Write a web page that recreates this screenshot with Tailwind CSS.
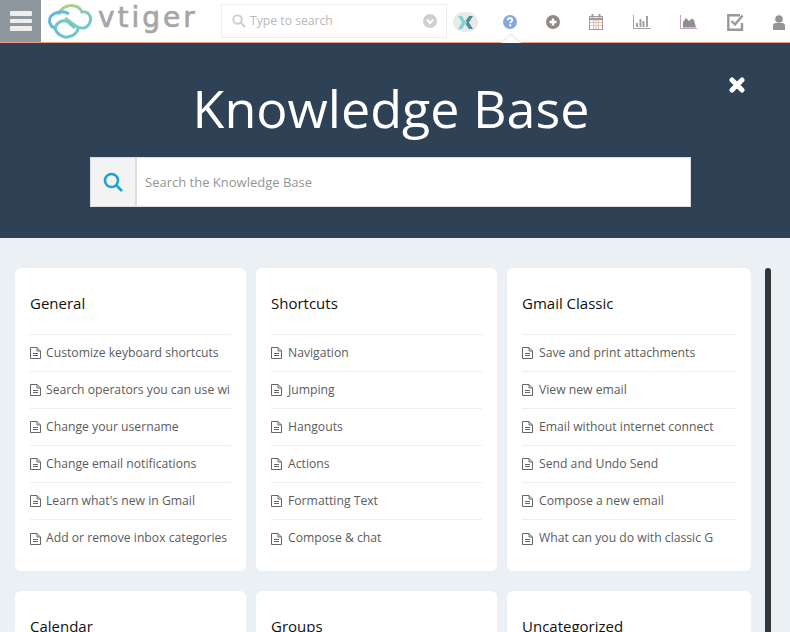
<!DOCTYPE html>
<html lang="en">
<head>
    <meta charset="UTF-8">
    <title>Knowledge Base</title>
    <script src="https://cdn.jsdelivr.net/npm/@tailwindcss/browser@4"></script>
</head>
<body class="bg-[#ebf0f4] font-['Open_Sans',sans-serif] h-[632px] w-[790px] overflow-hidden">
    <!-- top bar -->
    <div class="relative flex h-[43px] bg-white border-b border-[#f0a080]">
        <div class="flex flex-col justify-center gap-[3px] items-center w-[41px] h-[42px] bg-[#8f979e]">
            <div class="w-[22px] h-[5px] rounded-[1px] bg-[#eeeeee]"></div>
            <div class="w-[22px] h-[4px] rounded-[1px] bg-[#eeeeee]"></div>
            <div class="w-[22px] h-[5px] rounded-[1px] bg-[#eeeeee]"></div>
        </div>
        <div class="flex items-center w-[180px] pl-[7px]">
            <svg width="44" height="36" viewBox="0 0 44 36" fill="none" stroke-width="3">
                <defs>
                    <linearGradient id="cloudtop" x1="0" y1="0" x2="1" y2="1"><stop offset="0" stop-color="#b5d57a"/><stop offset="1" stop-color="#6cc6da"/></linearGradient>
                    <linearGradient id="cloudlow" x1="0" y1="0" x2="1" y2="1"><stop offset="0" stop-color="#5fb4ea"/><stop offset="1" stop-color="#6fc9c0"/></linearGradient>
                </defs>
                <path d="M11 12C12 5 20 1 27 3C31 4 33 7 34 9C40 8 44 13 42 19C40 25 34 27 28 23L17 15" stroke="url(#cloudtop)"/>
                <path d="M21 11C15 7 7 9 3 13C0 18 2 24 7 25C8 30 14 35 20 34C27 33 30 28 30 25" stroke="url(#cloudlow)"/>
                <path d="M7 25C9 19 15 16 20 19L27 25" stroke="#74c7c4"/>
            </svg>
            <span class="ml-[6px] -mt-[7px] text-[28px] leading-none tracking-[3px] text-[#a6a6a6] [-webkit-text-stroke:0.7px_#a6a6a6] font-['DejaVu_Sans',sans-serif]">vtiger</span>
        </div>
        <div class="flex items-center mt-[4px] w-[226px] h-[34px] border border-[#eeeeee] pl-[10px] pr-[9px]">
            <svg width="14" height="14" viewBox="0 0 14 14" fill="none" stroke="#cfcfcf" stroke-width="2"><circle cx="5.5" cy="5.5" r="4.2"/><path d="M8.8 8.8L13 13"/></svg>
            <span class="ml-[4px] text-[12.2px] text-[#b8b8b8] flex-1">Type to search</span>
            <svg width="14" height="14" viewBox="0 0 14 14"><circle cx="7" cy="7" r="7" fill="#cfcfcf"/><path d="M3.8 5.5L7 9L10.2 5.5" fill="none" stroke="#fff" stroke-width="2"/></svg>
        </div>
        <div class="flex items-center h-[42px] pt-[2px] ml-[6px]">
            <div class="flex items-center justify-center w-[25px] h-[20px] rounded-full bg-[#e8eaea]">
                <svg width="17" height="15" viewBox="0 0 17 15"><path d="M1 1H5L9 7.500L5 14H1L5 7.500Z" fill="#7fd3d3"/><path d="M16 1H12L8.500 6L10 7.500L8.500 9L12 14H16L12 7.500Z" fill="#4f8f98"/></svg>
            </div>
            <svg class="ml-[25px]" width="14" height="14" viewBox="0 0 14 14"><circle cx="7" cy="7" r="7" fill="#88a6e0"/><path d="M4.700 5.300C4.700 3.900 5.700 3.200 7 3.200C8.300 3.200 9.300 4 9.300 5.200C9.300 6.600 7.200 6.700 7.200 8.300" fill="none" stroke="#fff" stroke-width="1.800"/><rect x="6.200" y="9.400" width="2" height="1.900" fill="#fff"/></svg>
            <svg class="ml-[29px]" width="14" height="14" viewBox="0 0 14 14"><circle cx="7" cy="7" r="7" fill="#8d8a88"/><path d="M7 3.500V10.500M3.500 7H10.500" stroke="#fff" stroke-width="2.400"/></svg>
            <svg class="ml-[29px]" width="14" height="16" viewBox="0 0 14 16" fill="none" stroke="#a09c9c"><rect x=".5" y="2.500" width="13" height="13"/><path d="M1 5H13" stroke-width="2.500"/><path d="M1 8.500H13M1 11.500H13M4.500 6V15M7 6V15M9.500 6V15" stroke="#dcc0b4"/><path d="M3.500 0V3.500M10.500 0V3.500" stroke-width="2"/></svg>
            <svg class="ml-[30px]" width="18" height="14" viewBox="0 0 18 14" fill="none"><path d="M0.500 0V13.500H18" stroke="#a3a3a3"/><path d="M4 12V8M7.500 12V4M10.500 12V6M14 12V1" stroke="#a3a3a3" stroke-width="2"/></svg>
            <svg class="ml-[29px]" width="17" height="14" viewBox="0 0 17 14"><path d="M0.500 0V13.500H17" fill="none" stroke="#c8a0cc"/><path d="M3 12.500V7L6 3L9 6L12 3.500L14 5L16 12.500Z" fill="#8f8f8f"/></svg>
            <svg class="ml-[30px]" width="17" height="17" viewBox="0 0 17 17" fill="none"><path d="M15 9V15.700H1.300V1.300H13" stroke="#999999" stroke-width="2.400"/><path d="M4.500 7L8 10.500L15.500 1.500" stroke="#999999" stroke-width="2.400"/></svg>
            <svg class="ml-[29px]" width="12" height="15" viewBox="0 0 12 15"><circle cx="6" cy="4" r="3.800" fill="#949494"/><path d="M0 15V10.500C0 8.500 2 8 4 8H8C10 8 12 8.500 12 10.500V15Z" fill="#949494"/></svg>
        </div>
        <!-- active caret -->
        <svg class="absolute left-[501px] top-[34px]" width="20" height="9" viewBox="0 0 20 9"><path d="M0 9L10 0L20 9Z" fill="#fff"/><path d="M0 9L10 0L20 9" fill="none" stroke="#dddddd"/></svg>
    </div>

    <!-- hero -->
    <div class="relative h-[195px] bg-[#2f4155]">
        <h1 class="pt-[35px] pr-[8px] text-center text-[52px] leading-[60px] text-white">Knowledge Base</h1>
        <svg class="absolute left-[729px] top-[34px]" width="16" height="16" viewBox="0 0 16 16"><path d="M3 3L13 13M13 3L3 13" stroke="#fff" stroke-width="5" stroke-linecap="round"/></svg>
        <div class="flex mt-[19px] ml-[90px] w-[601px] h-[50px] bg-white border border-[#dddddd]">
            <div class="flex items-center justify-center w-[46px] bg-[#f3f3f3] border-r-2 border-[#dddddd]">
                <svg width="20" height="20" viewBox="0 0 20 20" fill="none" stroke="#1ca3d4" stroke-width="2.600"><circle cx="8.500" cy="8.500" r="6.500"/><path d="M13 13L19 19"/></svg>
            </div>
            <div class="flex items-center pl-[8px] pt-[1px] text-[13px] font-medium text-[#959595]">Search the Knowledge Base</div>
        </div>
    </div>

    <!-- article cards -->
    <div class="grid grid-cols-[231px_241px_244px] gap-x-[10px] gap-y-[20px] pl-[15px] pt-[30px]">
        <div class="bg-white rounded-[6px] px-[15px] h-[303px]">
            <h3 class="h-[67px] pt-[24px] text-[15px] leading-[22px] font-medium text-[#111111] border-b border-[#eeeeee]">General</h3>
            <div class="flex items-center h-[37px] border-b border-[#eeeeee] text-[12.2px] text-[#5c5c5c] whitespace-nowrap overflow-hidden"><svg class="mr-[5px] shrink-0" width="11" height="12" viewBox="0 0 11 12" fill="none" stroke="#666666"><path d="M7 .500H.500V11.500H10.500V4ZM7 .500V4H10.500M3 6.500H8M3 8.500H8"/></svg><span class="w-[184px] overflow-hidden">Customize keyboard shortcuts</span></div>
            <div class="flex items-center h-[37px] border-b border-[#eeeeee] text-[12.2px] text-[#5c5c5c] whitespace-nowrap overflow-hidden"><svg class="mr-[5px] shrink-0" width="11" height="12" viewBox="0 0 11 12" fill="none" stroke="#666666"><path d="M7 .500H.500V11.500H10.500V4ZM7 .500V4H10.500M3 6.500H8M3 8.500H8"/></svg><span class="w-[184px] overflow-hidden">Search operators you can use with Gmail</span></div>
            <div class="flex items-center h-[37px] border-b border-[#eeeeee] text-[12.2px] text-[#5c5c5c] whitespace-nowrap overflow-hidden"><svg class="mr-[5px] shrink-0" width="11" height="12" viewBox="0 0 11 12" fill="none" stroke="#666666"><path d="M7 .500H.500V11.500H10.500V4ZM7 .500V4H10.500M3 6.500H8M3 8.500H8"/></svg><span class="w-[184px] overflow-hidden">Change your username</span></div>
            <div class="flex items-center h-[37px] border-b border-[#eeeeee] text-[12.2px] text-[#5c5c5c] whitespace-nowrap overflow-hidden"><svg class="mr-[5px] shrink-0" width="11" height="12" viewBox="0 0 11 12" fill="none" stroke="#666666"><path d="M7 .500H.500V11.500H10.500V4ZM7 .500V4H10.500M3 6.500H8M3 8.500H8"/></svg><span class="w-[184px] overflow-hidden">Change email notifications</span></div>
            <div class="flex items-center h-[37px] border-b border-[#eeeeee] text-[12.2px] text-[#5c5c5c] whitespace-nowrap overflow-hidden"><svg class="mr-[5px] shrink-0" width="11" height="12" viewBox="0 0 11 12" fill="none" stroke="#666666"><path d="M7 .500H.500V11.500H10.500V4ZM7 .500V4H10.500M3 6.500H8M3 8.500H8"/></svg><span class="w-[184px] overflow-hidden">Learn what's new in Gmail</span></div>
            <div class="flex items-center h-[37px] text-[12.2px] text-[#5c5c5c] whitespace-nowrap overflow-hidden"><svg class="mr-[5px] shrink-0" width="11" height="12" viewBox="0 0 11 12" fill="none" stroke="#666666"><path d="M7 .500H.500V11.500H10.500V4ZM7 .500V4H10.500M3 6.500H8M3 8.500H8"/></svg><span class="w-[184px] overflow-hidden">Add or remove inbox categories</span></div>
        </div>
        <div class="bg-white rounded-[6px] px-[15px] h-[303px]">
            <h3 class="h-[67px] pt-[24px] text-[15px] leading-[22px] font-medium text-[#111111] border-b border-[#eeeeee]">Shortcuts</h3>
            <div class="flex items-center h-[37px] border-b border-[#eeeeee] text-[12.2px] text-[#5c5c5c] whitespace-nowrap"><svg class="mr-[6px] shrink-0" width="11" height="12" viewBox="0 0 11 12" fill="none" stroke="#666666"><path d="M7 .500H.500V11.500H10.500V4ZM7 .500V4H10.500M3 6.500H8M3 8.500H8"/></svg>Navigation</div>
            <div class="flex items-center h-[37px] border-b border-[#eeeeee] text-[12.2px] text-[#5c5c5c] whitespace-nowrap"><svg class="mr-[6px] shrink-0" width="11" height="12" viewBox="0 0 11 12" fill="none" stroke="#666666"><path d="M7 .500H.500V11.500H10.500V4ZM7 .500V4H10.500M3 6.500H8M3 8.500H8"/></svg>Jumping</div>
            <div class="flex items-center h-[37px] border-b border-[#eeeeee] text-[12.2px] text-[#5c5c5c] whitespace-nowrap"><svg class="mr-[6px] shrink-0" width="11" height="12" viewBox="0 0 11 12" fill="none" stroke="#666666"><path d="M7 .500H.500V11.500H10.500V4ZM7 .500V4H10.500M3 6.500H8M3 8.500H8"/></svg>Hangouts</div>
            <div class="flex items-center h-[37px] border-b border-[#eeeeee] text-[12.2px] text-[#5c5c5c] whitespace-nowrap"><svg class="mr-[6px] shrink-0" width="11" height="12" viewBox="0 0 11 12" fill="none" stroke="#666666"><path d="M7 .500H.500V11.500H10.500V4ZM7 .500V4H10.500M3 6.500H8M3 8.500H8"/></svg>Actions</div>
            <div class="flex items-center h-[37px] border-b border-[#eeeeee] text-[12.2px] text-[#5c5c5c] whitespace-nowrap"><svg class="mr-[6px] shrink-0" width="11" height="12" viewBox="0 0 11 12" fill="none" stroke="#666666"><path d="M7 .500H.500V11.500H10.500V4ZM7 .500V4H10.500M3 6.500H8M3 8.500H8"/></svg>Formatting Text</div>
            <div class="flex items-center h-[37px] text-[12.2px] text-[#5c5c5c] whitespace-nowrap"><svg class="mr-[6px] shrink-0" width="11" height="12" viewBox="0 0 11 12" fill="none" stroke="#666666"><path d="M7 .500H.500V11.500H10.500V4ZM7 .500V4H10.500M3 6.500H8M3 8.500H8"/></svg>Compose &amp; chat</div>
        </div>
        <div class="bg-white rounded-[6px] px-[15px] h-[303px]">
            <h3 class="h-[67px] pt-[24px] text-[15px] leading-[22px] font-medium text-[#111111] border-b border-[#eeeeee]">Gmail Classic</h3>
            <div class="flex items-center h-[37px] border-b border-[#eeeeee] text-[12.2px] text-[#5c5c5c] whitespace-nowrap"><svg class="mr-[6px] shrink-0" width="11" height="12" viewBox="0 0 11 12" fill="none" stroke="#666666"><path d="M7 .500H.500V11.500H10.500V4ZM7 .500V4H10.500M3 6.500H8M3 8.500H8"/></svg>Save and print attachments</div>
            <div class="flex items-center h-[37px] border-b border-[#eeeeee] text-[12.2px] text-[#5c5c5c] whitespace-nowrap"><svg class="mr-[6px] shrink-0" width="11" height="12" viewBox="0 0 11 12" fill="none" stroke="#666666"><path d="M7 .500H.500V11.500H10.500V4ZM7 .500V4H10.500M3 6.500H8M3 8.500H8"/></svg>View new email</div>
            <div class="flex items-center h-[37px] border-b border-[#eeeeee] text-[12.2px] text-[#5c5c5c] whitespace-nowrap"><svg class="mr-[6px] shrink-0" width="11" height="12" viewBox="0 0 11 12" fill="none" stroke="#666666"><path d="M7 .500H.500V11.500H10.500V4ZM7 .500V4H10.500M3 6.500H8M3 8.500H8"/></svg><span class="w-[175px] overflow-hidden">Email without internet connect</span></div>
            <div class="flex items-center h-[37px] border-b border-[#eeeeee] text-[12.2px] text-[#5c5c5c] whitespace-nowrap"><svg class="mr-[6px] shrink-0" width="11" height="12" viewBox="0 0 11 12" fill="none" stroke="#666666"><path d="M7 .500H.500V11.500H10.500V4ZM7 .500V4H10.500M3 6.500H8M3 8.500H8"/></svg>Send and Undo Send</div>
            <div class="flex items-center h-[37px] border-b border-[#eeeeee] text-[12.2px] text-[#5c5c5c] whitespace-nowrap"><svg class="mr-[6px] shrink-0" width="11" height="12" viewBox="0 0 11 12" fill="none" stroke="#666666"><path d="M7 .500H.500V11.500H10.500V4ZM7 .500V4H10.500M3 6.500H8M3 8.500H8"/></svg>Compose a new email</div>
            <div class="flex items-center h-[37px] text-[12.2px] text-[#5c5c5c] whitespace-nowrap"><svg class="mr-[6px] shrink-0" width="11" height="12" viewBox="0 0 11 12" fill="none" stroke="#666666"><path d="M7 .500H.500V11.500H10.500V4ZM7 .500V4H10.500M3 6.500H8M3 8.500H8"/></svg><span class="w-[175px] overflow-hidden">What can you do with classic Gmail</span></div>
        </div>
        <div class="bg-white rounded-[6px] px-[15px] h-[303px]">
            <h3 class="h-[67px] pt-[24px] text-[15px] leading-[22px] font-medium text-[#111111]">Calendar</h3>
        </div>
        <div class="bg-white rounded-[6px] px-[15px] h-[303px]">
            <h3 class="h-[67px] pt-[24px] text-[15px] leading-[22px] font-medium text-[#111111]">Groups</h3>
        </div>
        <div class="bg-white rounded-[6px] px-[15px] h-[303px]">
            <h3 class="h-[67px] pt-[24px] text-[15px] leading-[22px] font-medium text-[#111111]">Uncategorized</h3>
        </div>
    </div>
    <!-- scrollbar -->
    <div class="absolute left-[765px] top-[268px] w-[6px] h-[364px] rounded-t-[3px] bg-[#333537]"></div>
</body>
</html>
